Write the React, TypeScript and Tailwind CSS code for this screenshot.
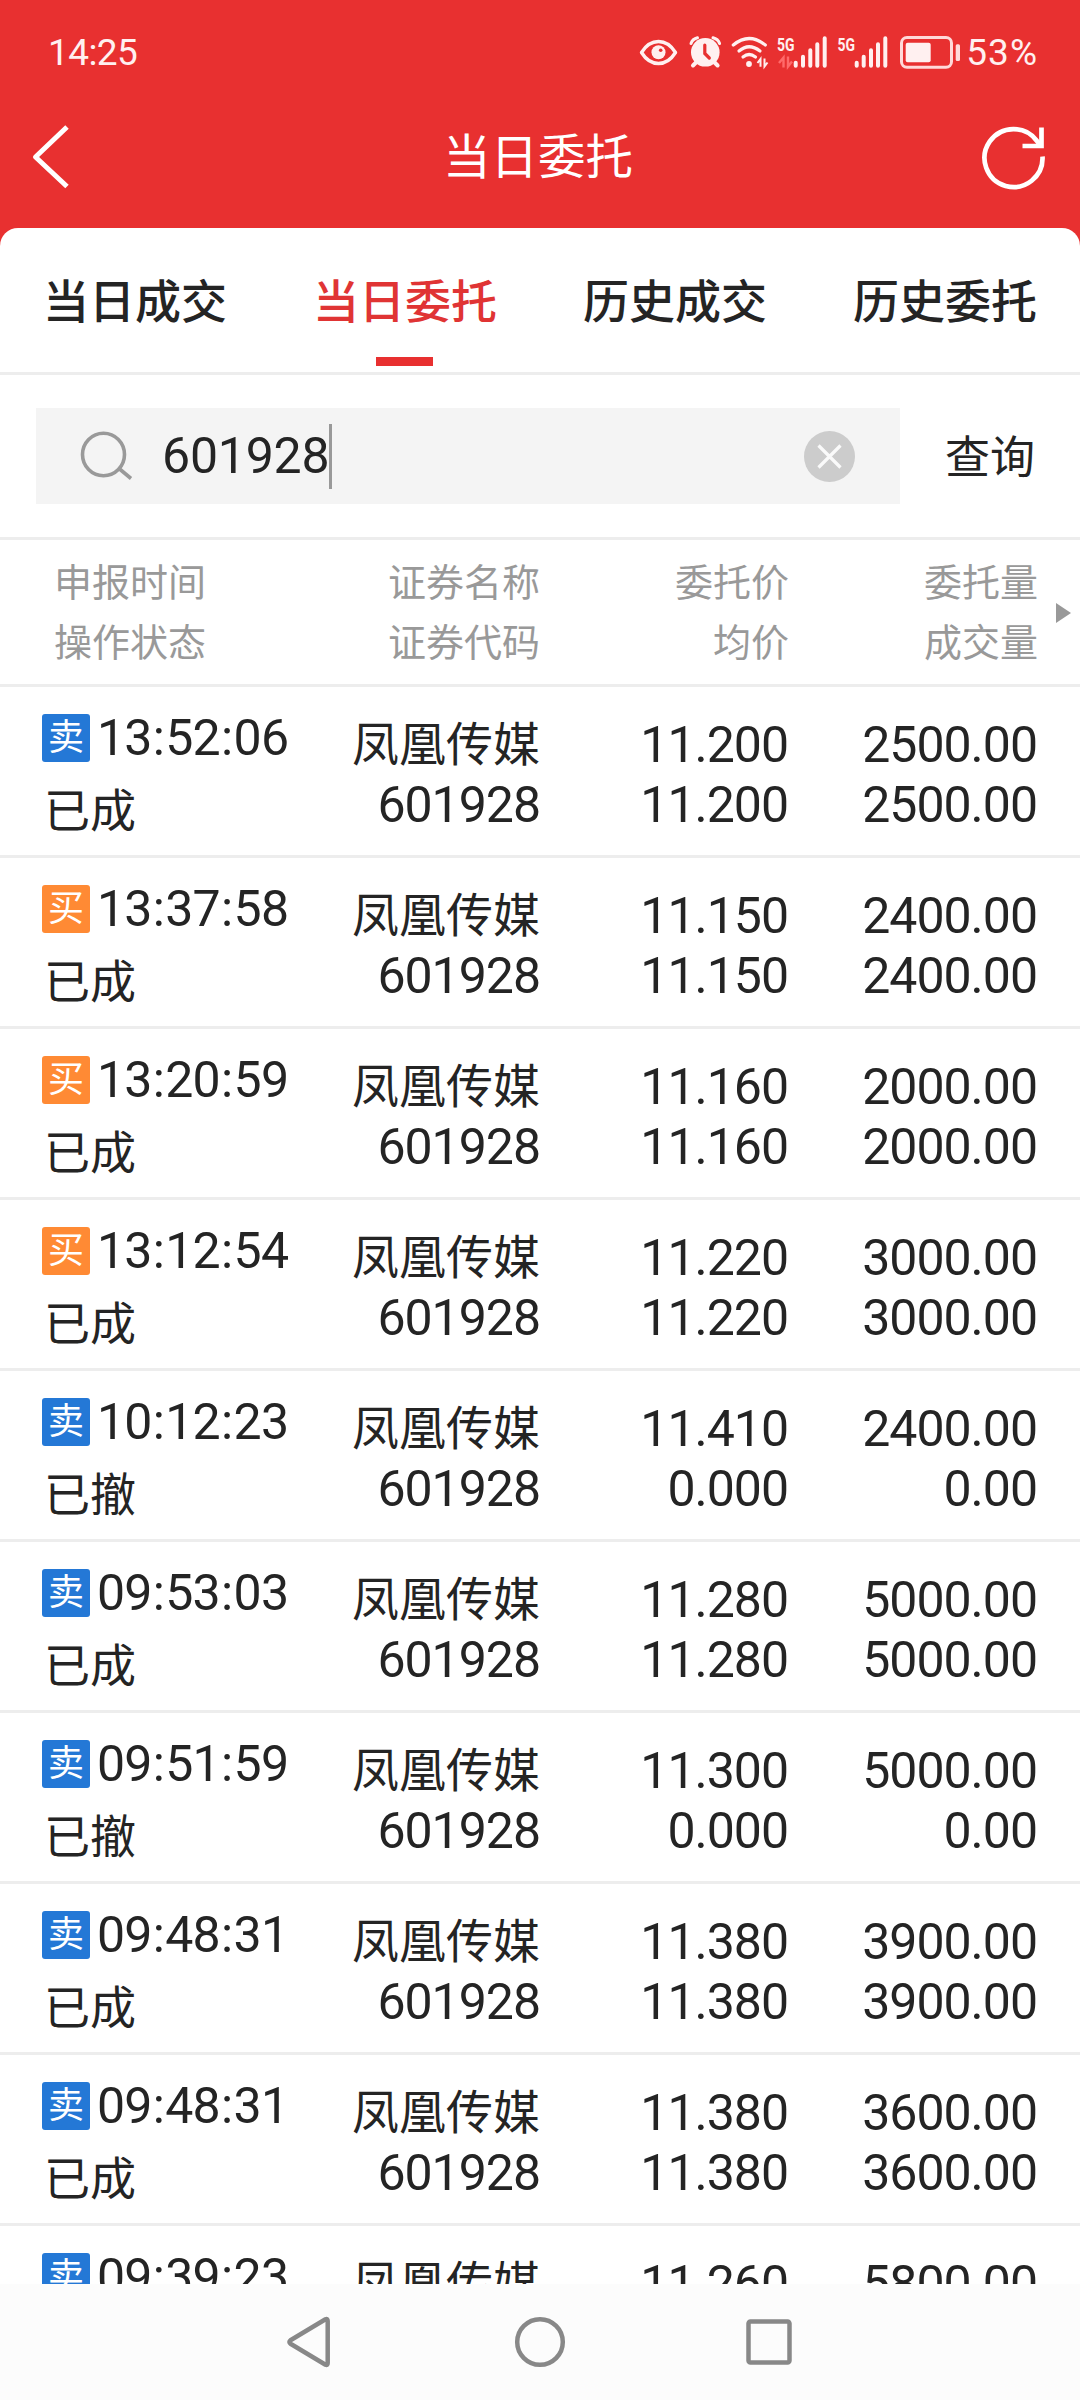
import React from 'react';
import clsx from 'clsx';

type Side = 'buy' | 'sell';

interface Order {
  side: Side;
  time: string;
  status: string;
  price: string;
  avgPrice: string;
  amount: string;
  dealt: string;
}

const STOCK = { name: '凤凰传媒', code: '601928' };

const tabs = ['当日成交', '当日委托', '历史成交', '历史委托'];
const activeTab = '当日委托';

const orders: Order[] = [
  { side: 'sell', time: '13:52:06', status: '已成', price: '11.200', avgPrice: '11.200', amount: '2500.00', dealt: '2500.00' },
  { side: 'buy', time: '13:37:58', status: '已成', price: '11.150', avgPrice: '11.150', amount: '2400.00', dealt: '2400.00' },
  { side: 'buy', time: '13:20:59', status: '已成', price: '11.160', avgPrice: '11.160', amount: '2000.00', dealt: '2000.00' },
  { side: 'buy', time: '13:12:54', status: '已成', price: '11.220', avgPrice: '11.220', amount: '3000.00', dealt: '3000.00' },
  { side: 'sell', time: '10:12:23', status: '已撤', price: '11.410', avgPrice: '0.000', amount: '2400.00', dealt: '0.00' },
  { side: 'sell', time: '09:53:03', status: '已成', price: '11.280', avgPrice: '11.280', amount: '5000.00', dealt: '5000.00' },
  { side: 'sell', time: '09:51:59', status: '已撤', price: '11.300', avgPrice: '0.000', amount: '5000.00', dealt: '0.00' },
  { side: 'sell', time: '09:48:31', status: '已成', price: '11.380', avgPrice: '11.380', amount: '3900.00', dealt: '3900.00' },
  { side: 'sell', time: '09:48:31', status: '已成', price: '11.380', avgPrice: '11.380', amount: '3600.00', dealt: '3600.00' },
  { side: 'sell', time: '09:39:23', status: '已成', price: '11.260', avgPrice: '11.260', amount: '5800.00', dealt: '5800.00' },
];

const StatusIcons: React.FC = () => (
  <svg width="323" height="36" viewBox="0 0 323 36" fill="none" stroke="#fff0f0" aria-hidden="true">
    {/* eye */}
    <path d="M3.500 18.500C8.500 10.500 13.500 7.500 20.500 7.500S32.500 10.500 37.500 18.500C32.500 26.500 27.500 29.500 20.500 29.500S8.500 26.500 3.500 18.500Z" strokeWidth="3.400" strokeLinejoin="round" />
    <circle cx="20.500" cy="18.300" r="7" fill="#fff0f0" stroke="none" />
    <circle cx="22.700" cy="16.300" r="1.800" fill="#e83030" stroke="none" />
    {/* alarm clock */}
    <circle cx="67.300" cy="18.300" r="14.300" fill="#fff0f0" stroke="none" />
    <path d="M53 9.500Q54.500 5 59.500 3.800M81.600 9.500Q80 5 75 3.800" strokeWidth="3" strokeLinecap="round" />
    <path d="M58 28.500l-3 3M76.600 28.500l3 3" strokeWidth="4" strokeLinecap="round" />
    <path d="M66.800 11V19.500l4.500 4.500" stroke="#e83030" strokeWidth="3.200" strokeLinecap="round" />
    {/* wifi */}
    <g strokeWidth="3.200" strokeLinecap="round">
      <path d="M95.300 11Q111 -2 127.300 11" />
      <path d="M101 17Q111 8.500 122 17" />
      <path d="M105 23Q111 18 117.500 23" />
    </g>
    <circle cx="111" cy="30" r="2.900" fill="#fff0f0" stroke="none" />
    <path d="M122.500 32.800V25l-3 4M126.500 24.500v8l3-4" strokeWidth="2" />
    {/* first signal */}
    <text x="139" y="16.800" fontSize="19" fontWeight="700" fill="#fff0f0" stroke="none" textLength="17.500" lengthAdjust="spacingAndGlyphs">5G</text>
    <path d="M145.500 33.500V23.500l-4.500 5.500M150 22.500v10l4-5" stroke="#ff6a6a" strokeWidth="2.400" />
    <path d="M157.700 28.700V31.700M165 22.700V31.700M172.300 16.300V31.700M179.300 10.300V31.700M186.700 4.300V31.700" strokeWidth="4" strokeLinecap="round" />
    {/* second signal */}
    <text x="199.500" y="16.800" fontSize="19" fontWeight="700" fill="#fff0f0" stroke="none" textLength="17.500" lengthAdjust="spacingAndGlyphs">5G</text>
    <path d="M218.700 28.700V31.700M225.700 22.700V31.700M233 16.300V31.700M240 10.300V31.700M247.300 4.300V31.700" strokeWidth="4" strokeLinecap="round" />
    {/* battery */}
    <rect x="263.500" y="3.500" width="50" height="29.700" rx="5.500" strokeWidth="3" stroke="#ffd9d9" />
    <rect x="267.700" y="8.700" width="25" height="19.600" rx="2" fill="#fff0f0" stroke="none" />
    <rect x="317.700" y="10.300" width="4.300" height="16.700" rx="1.500" fill="#ffd9d9" stroke="none" />
  </svg>
);

const Header: React.FC = () => (
  <header className="h-[228px] shrink-0 text-white">
    <div className="flex h-[104px] items-center justify-between pl-[48px] pr-[42px] text-[37px] text-[#fff0f0]">
      <span className="pt-px tracking-[-0.6px]">14:25</span>
      <div className="flex items-center gap-[5px]">
        <StatusIcons />
        <span className="pt-px tracking-[1px]">53%</span>
      </div>
    </div>
    <div className="flex h-[106px] items-center justify-between pl-[30px] pr-[34px]">
      <svg width="44" height="66" viewBox="0 0 44 66" fill="none" stroke="white" strokeWidth="5" strokeLinejoin="round">
        <path d="M37 3L5.500 33L37 62.500" />
      </svg>
      <h1 className="pl-[22px] pt-[3px] text-[47.500px]">当日委托</h1>
      <svg width="66" height="66" viewBox="0 0 66 66" fill="none" stroke="white" strokeWidth="4.700">
        <path d="M62.500 32.500A29 29 0 1 1 57 17L60.500 21.500" />
        <path d="M61.500 3.500V22H42.500" />
      </svg>
    </div>
  </header>
);

const Tabs: React.FC = () => (
  <nav className="flex h-[147px] shrink-0 border-b-3 border-[#ededed]">
    {tabs.map((tab) => (
      <div
        key={tab}
        className={clsx(
          'flex flex-1 flex-col items-center pt-[44px] text-[46px] font-medium leading-[60px]',
          tab === activeTab ? 'text-[#e03434]' : 'text-[#242424]',
        )}
      >
        {tab}
        {tab === activeTab && <span className="mr-px mt-[25px] h-[9px] w-[57px] bg-[#e83030]" />}
      </div>
    ))}
  </nav>
);

const SearchBar: React.FC = () => (
  <div className="flex h-[165px] shrink-0 items-center border-b-3 border-[#ededed] pl-[36px] text-[#242424]">
    <div className="flex h-[96px] w-[864px] items-center bg-[#f4f4f4] pl-[43px] pr-[45px]">
      <svg width="54" height="54" viewBox="0 0 54 54" fill="none" stroke="#999" strokeWidth="3.600">
        <ellipse cx="24.500" cy="25.500" rx="21" ry="21.300" />
        <path d="M40 39.500L52 49.500" />
      </svg>
      <span className="ml-[29px] text-[50px] leading-[60px] tracking-[-0.2px]">601928</span>
      <span className="h-[65px] w-[3px] bg-[#999]" />
      <svg className="ml-auto" width="51" height="51" viewBox="0 0 51 51" fill="none">
        <circle cx="25.500" cy="25.500" r="25.500" fill="#ccc" />
        <path d="M14.500 14.500L36.500 36.500M36.500 14.500L14.500 36.500" stroke="#fafafa" strokeWidth="3.200" />
      </svg>
    </div>
    <button className="flex-1 pt-[5px] text-[45px]">查询</button>
  </div>
);

const TableHead: React.FC = () => (
  <div className="flex h-[147px] shrink-0 items-center border-b-3 border-[#ededed] pt-px text-[38px] leading-[60px] text-[#999]">
    <div className="w-[300px] pl-[54px]">
      <p>申报时间</p>
      <p>操作状态</p>
    </div>
    <div className="w-[240px] text-right">
      <p>证券名称</p>
      <p>证券代码</p>
    </div>
    <div className="w-[249px] text-right">
      <p>委托价</p>
      <p>均价</p>
    </div>
    <div className="w-[249px] text-right">
      <p>委托量</p>
      <p>成交量</p>
    </div>
    <svg className="ml-[18px]" width="15" height="20" viewBox="0 0 15 20">
      <path d="M0 0L15 10L0 20Z" fill="#999" />
    </svg>
  </div>
);

const Time: React.FC<{ value: string }> = ({ value }) => (
  <span className="ml-[7px] text-[50px] tracking-[-0.8px]">
    {value.split(':').map((part, i) => (
      <React.Fragment key={i}>
        {i > 0 && <span className="mx-[1.2px]">:</span>}
        {part}
      </React.Fragment>
    ))}
  </span>
);

const OrderRow: React.FC<{ order: Order }> = ({ order }) => (
  <div className="flex h-[171px] shrink-0 border-b-3 border-[#ededed] text-[50px] leading-[60px] text-[#242424]">
    <div className="w-[300px] pl-[42px] pt-[21px]">
      <div className="flex items-center">
        <span
          className={clsx(
            'flex size-[48px] items-center justify-center rounded-[3px] text-[36px] text-white',
            order.side === 'sell' ? 'bg-[#2478d6]' : 'bg-[#ff8a34]',
          )}
        >
          {order.side === 'sell' ? '卖' : '买'}
        </span>
        <Time value={order.time} />
      </div>
      <p className="mt-[13px] pl-[2px] text-[46px]">{order.status}</p>
    </div>
    <div className="w-[240px] pt-[28px] text-right">
      <p className="text-[47px]">{STOCK.name}</p>
      <p className="tracking-[-1px]">{STOCK.code}</p>
    </div>
    <div className="w-[248px] pt-[28px] text-right tracking-[-1px]">
      <p>{order.price}</p>
      <p>{order.avgPrice}</p>
    </div>
    <div className="w-[249px] pt-[28px] text-right tracking-[-1px]">
      <p>{order.amount}</p>
      <p>{order.dealt}</p>
    </div>
  </div>
);

const NavigationBar: React.FC = () => (
  <footer className="h-[116px] shrink-0 bg-[#fcfcfc] pl-[284px] pt-[31px]">
    <svg width="512" height="54" viewBox="0 0 512 54" fill="none" stroke="#888" strokeWidth="4.500" strokeLinejoin="round">
      <path d="M41.500 4.300Q43.700 3.500 43.700 6V48Q43.700 50.500 41.500 49.700L6.500 28.800Q4.300 27 6.500 25.200Z" />
      <circle cx="256" cy="27" r="22.800" />
      <rect x="464.500" y="6.500" width="41" height="41" rx="2" />
    </svg>
  </footer>
);

export default function App() {
  return (
    <div className="flex h-[2400px] w-[1080px] flex-col overflow-hidden bg-[#e83030] font-['Roboto','Noto_Sans_CJK_SC',sans-serif]">
      <Header />
      <main className="flex h-[2056px] flex-col overflow-hidden rounded-t-[18px] bg-white">
        <Tabs />
        <SearchBar />
        <TableHead />
        {orders.map((order, i) => (
          <OrderRow key={i} order={order} />
        ))}
      </main>
      <NavigationBar />
    </div>
  );
}
